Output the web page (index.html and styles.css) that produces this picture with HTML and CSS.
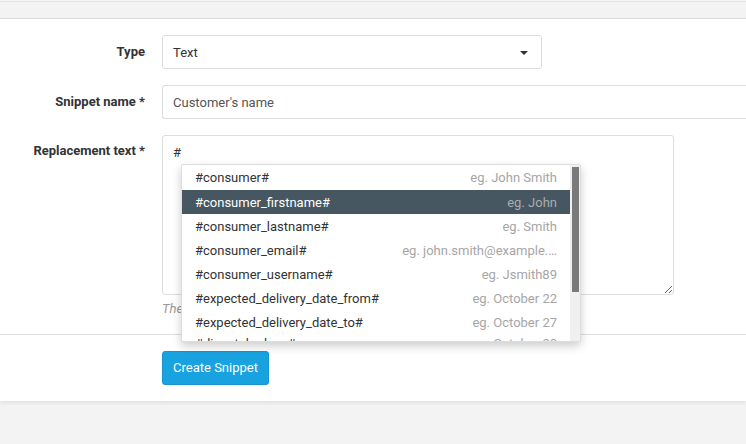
FILE: index.html
```html
<!DOCTYPE html>
<html>
<head>
<meta charset="utf-8">
<link rel="stylesheet" href="styles.css">
</head>
<body>
<div class="topband"></div>
<div class="card">
  <div class="form">
    <label class="label">Type</label>
    <div class="field">
      <div class="select"><span>Text</span><span class="caret"></span></div>
    </div>
    <label class="label">Snippet name *</label>
    <div class="field">
      <input class="input" type="text" value="Customer's name">
    </div>
    <label class="label label-top">Replacement text *</label>
    <div class="field">
      <div class="area-wrap">
        <textarea class="textarea">#</textarea>
        <div class="dropdown">
          <ul class="list">
            <li class="item"><span>#consumer#</span><span class="hint">eg. John Smith</span></li>
            <li class="item active"><span>#consumer_firstname#</span><span class="hint">eg. John</span></li>
            <li class="item"><span>#consumer_lastname#</span><span class="hint">eg. Smith</span></li>
            <li class="item"><span>#consumer_email#</span><span class="hint">eg. john.smith@example.…</span></li>
            <li class="item"><span>#consumer_username#</span><span class="hint">eg. Jsmith89</span></li>
            <li class="item"><span>#expected_delivery_date_from#</span><span class="hint">eg. October 22</span></li>
            <li class="item"><span>#expected_delivery_date_to#</span><span class="hint">eg. October 27</span></li>
            <li class="item last"><span>#dispatched_on#</span><span class="hint">eg. October 20</span></li>
          </ul>
          <div class="track"><div class="thumb"></div></div>
        </div>
      </div>
      <p class="help">The text that will replace the snippet tag</p>
    </div>
  </div>
  <div class="actions">
    <button class="btn">Create Snippet</button>
  </div>
</div>
</body>
</html>
```

FILE: styles.css
```css
html, body {
  margin: 0;
  padding: 0;
}
body {
  background: #f3f3f3;
  font-family: Roboto, "Liberation Sans", sans-serif;
  font-size: 13px;
  color: #333;
  width: 746px;
  height: 444px;
  overflow: hidden;
}
.topband {
  margin-top: 1px;
  height: 16px;
  border-top: 1px solid #e2e2e2;
  border-bottom: 1px solid #dcdcdc;
  background: #f3f3f3;
}
.card {
  background: #fff;
  box-shadow: 0 2px 4px rgba(0,0,0,0.08);
}
.form {
  display: grid;
  grid-template-columns: 145px 1fr;
  column-gap: 17px;
  row-gap: 16px;
  padding: 16px 0 16px 0;
  border-bottom: 1px solid #ddd;
}
.label {
  font-weight: bold;
  text-align: right;
  line-height: 34px;
  color: #333;
}
.label-top {
  line-height: 18px;
  padding-top: 7px;
}
.field {
  min-width: 0;
}
.select {
  height: 32px;
  border: 1px solid #ddd;
  border-radius: 3px;
  display: flex;
  align-items: center;
  justify-content: space-between;
  padding: 0 13px 0 10px;
  box-sizing: content-box;
  width: 355px;
  color: #333;
}
.caret {
  width: 0;
  height: 0;
  border-left: 4px solid transparent;
  border-right: 4px solid transparent;
  border-top: 4px solid #333;
  margin-top: 1px;
}
.input {
  display: block;
  width: 620px;
  height: 34px;
  box-sizing: border-box;
  border: 1px solid #ddd;
  border-right: none;
  border-radius: 3px 0 0 3px;
  padding: 0 10px;
  font-family: Roboto, "Liberation Sans", sans-serif;
  font-size: 13px;
  color: #555;
  outline: none;
}
.area-wrap {
  position: relative;
  width: 512px;
}
.textarea {
  display: block;
  width: 512px;
  height: 160px;
  box-sizing: border-box;
  border: 1px solid #ddd;
  border-radius: 3px;
  padding: 8px 10px 6px 10px;
  font-family: Roboto, "Liberation Sans", sans-serif;
  font-size: 13px;
  line-height: 18px;
  color: #333;
  outline: none;
  margin: 0;
}
.help {
  margin: 5px 0 0 0;
  line-height: 18px;
  font-style: italic;
  color: #999;
}
.dropdown {
  position: absolute;
  left: 19px;
  top: 29px;
  width: 400px;
  height: 178px;
  box-sizing: border-box;
  border: 1px solid #ddd;
  border-radius: 2px;
  background: #fff;
  box-shadow: 0 4px 10px rgba(0,0,0,0.2);
  display: flex;
  overflow: hidden;
  z-index: 5;
}
.list {
  list-style: none;
  margin: 0;
  padding: 0;
  flex: 1;
}
.item {
  height: 24px;
  display: flex;
  align-items: center;
  justify-content: space-between;
  padding: 0 13px;
  white-space: nowrap;
  color: #333;
}
.item:first-child {
  height: 25px;
}
.item.last {
  margin-top: -3px;
}
.hint {
  color: #a6a6a6;
}
.item.active {
  background: #465761;
  color: #fff;
}
.item.active .hint {
  color: #a8adb0;
}
.track {
  width: 10px;
  background: #f0f0f0;
  padding: 2px 0 0 2px;
  box-sizing: border-box;
}
.thumb {
  width: 7px;
  height: 125px;
  background: #7a7a7a;
}
.actions {
  padding: 16px 0 16px 162px;
}
.btn {
  display: block;
  height: 34px;
  padding: 0 10px 2px 10px;
  width: 107px;
  background: #19a2e0;
  border: 1px solid #1695cf;
  border-radius: 3px;
  color: #fff;
  font-family: Roboto, "Liberation Sans", sans-serif;
  font-size: 13px;
}
```
